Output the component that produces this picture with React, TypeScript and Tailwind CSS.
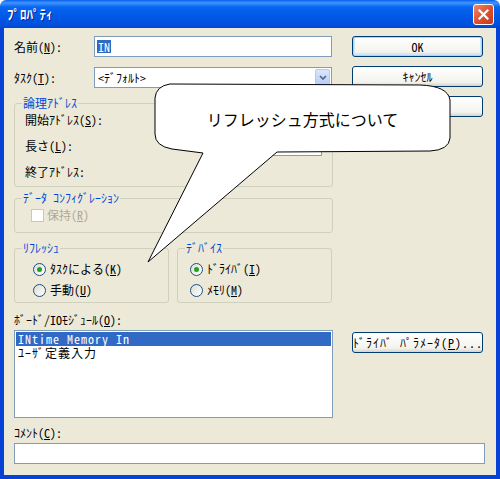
import React from 'react';

const btn =
  'h-[21px] w-[131px] rounded-[3px] border border-[#003C74] bg-[linear-gradient(#FFFFFF,#F3F3EE_80%,#D8D3C8)] flex items-center justify-center';

function Radio({ checked, children }: { checked?: boolean; children: React.ReactNode }) {
  return (
    <div className="flex items-center gap-[4px] h-[20px]">
      <span className="w-[13px] h-[13px] rounded-full border border-[#1C5180] bg-[linear-gradient(135deg,#DCDCD7,#FFFFFF)] flex items-center justify-center">
        {checked && <span className="w-[5px] h-[5px] rounded-full bg-[#21A121]" />}
      </span>
      <span>{children}</span>
    </div>
  );
}

function Legend({ children }: { children: React.ReactNode }) {
  return <legend className="ml-[7px] px-[1px] leading-[12px] text-[#0046D5]">{children}</legend>;
}

export default function App() {
  return (
    <div className="relative w-[500px] h-[479px] flex flex-col text-[12px] leading-[14px] text-black font-['Noto_Sans_Mono_CJK_JP','Noto_Sans_CJK_JP',sans-serif]">
      {/* title bar */}
      <div className="h-[28px] flex items-center justify-between pl-[7px] pr-[6px] rounded-t-[6px] bg-[linear-gradient(#0A5FEE,#3D95FF_10%,#0866F0_25%,#0058E6_60%,#0050DC_90%,#0044CF)]">
        <span className="text-white font-bold text-[13px] [text-shadow:1px_1px_#0A1E8C]">ﾌﾟﾛﾊﾟﾃｨ</span>
        <div className="w-[21px] h-[21px] rounded-[3px] border border-white bg-[linear-gradient(135deg,#F08A6A,#E0502F_50%,#C53A1A)] flex items-center justify-center">
          <svg width="11" height="11" viewBox="0 0 11 11">
            <path d="M1.5 1.5 L9.5 9.5 M9.5 1.5 L1.5 9.5" stroke="white" strokeWidth="2.2" strokeLinecap="square" />
          </svg>
        </div>
      </div>

      {/* body */}
      <div className="flex-1 flex flex-col bg-[#ECE9D8] border-x-4 border-b-4 border-[#0841D6] pl-[10px] pr-[11px]">
        <div className="flex gap-[19px]">
          <div className="w-[319px] flex flex-col">
            <div className="mt-[8px] flex items-center h-[21px]">
              <span className="w-[80px]">名前(<u>N</u>):</span>
              <div className="w-[238px] h-[21px] border border-[#7F9DB9] bg-white flex items-center pl-[2px]">
                <span className="bg-[#316AC5] text-white px-[1px] leading-[13px]">IN</span>
              </div>
            </div>
            <div className="mt-[10px] flex items-center h-[21px]">
              <span className="w-[80px]">ﾀｽｸ(<u>T</u>):</span>
              <div className="w-[238px] h-[21px] border border-[#7F9DB9] bg-white flex items-center justify-between pl-[3px] pr-[1px]">
                <span>&lt;ﾃﾞﾌｫﾙﾄ&gt;</span>
                <div className="w-[15px] h-[17px] rounded-[2px] border border-[#B4C8F6] bg-[linear-gradient(#DCE6FC,#B6CBF8)] flex items-center justify-center">
                  <svg width="8" height="5" viewBox="0 0 8 5">
                    <path d="M1 1 L4 4 L7 1" stroke="#4D6185" strokeWidth="1.6" fill="none" />
                  </svg>
                </div>
              </div>
            </div>

            <fieldset className="mt-[9px] border border-[#D0D0BF] rounded-[3px] pb-[4px]">
              <Legend>論理ｱﾄﾞﾚｽ</Legend>
              <div className="pl-[10px]">
                <div className="mt-[1px] flex items-center h-[20px]">
                  <span className="w-[179px]">開始ｱﾄﾞﾚｽ(<u>S</u>):</span>
                  <div className="w-[118px] h-[20px] border border-[#7F9DB9] bg-white" />
                </div>
                <div className="mt-[6px] flex items-center h-[20px]">
                  <span className="w-[179px]">長さ(<u>L</u>):</span>
                  <div className="w-[118px] h-[20px] border border-[#7F9DB9] bg-white" />
                </div>
                <div className="mt-[6px] flex items-center h-[20px]">
                  <span>終了ｱﾄﾞﾚｽ:</span>
                </div>
              </div>
            </fieldset>

            <fieldset className="mt-[5px] border border-[#D0D0BF] rounded-[3px] pb-[8px]">
              <Legend>ﾃﾞｰﾀ ｺﾝﾌｨｸﾞﾚｰｼｮﾝ</Legend>
              <div className="pl-[16px] mt-[2px] flex items-center gap-[3px] h-[18px] text-[#ACA899]">
                <span className="w-[13px] h-[13px] border border-[#CAC8BB] bg-white" />
                <span>保持(<u>R</u>)</span>
              </div>
            </fieldset>

            <div className="mt-[9px] flex gap-[8px]">
              <fieldset className="w-[155px] border border-[#D0D0BF] rounded-[3px] pb-[2px]">
                <Legend>ﾘﾌﾚｯｼｭ</Legend>
                <div className="pl-[18px] mt-[5px] flex flex-col gap-[1px]">
                  <Radio checked>ﾀｽｸによる(<u>K</u>)</Radio>
                  <Radio>手動(<u>U</u>)</Radio>
                </div>
              </fieldset>
              <fieldset className="w-[155px] border border-[#D0D0BF] rounded-[3px] pb-[2px]">
                <Legend>ﾃﾞﾊﾞｲｽ</Legend>
                <div className="pl-[12px] mt-[5px] flex flex-col gap-[1px]">
                  <Radio checked>ﾄﾞﾗｲﾊﾞ(<u>I</u>)</Radio>
                  <Radio>ﾒﾓﾘ(<u>M</u>)</Radio>
                </div>
              </fieldset>
            </div>

            <div className="mt-[10px]">ﾎﾞｰﾄﾞ/IOﾓｼﾞｭｰﾙ(<u>O</u>):</div>
          </div>

          <div className="w-[131px] flex flex-col pt-[8px] gap-[9px]">
            <button className={`${btn} shadow-[inset_0_0_0_1px_#B8D0F5,inset_0_-1px_0_2px_#CEE7FF]`}>OK</button>
            <button className={btn}>ｷｬﾝｾﾙ</button>
            <button className={btn}>ﾍﾙﾌﾟ</button>
          </div>
        </div>

        <div className="mt-[3px] flex gap-[19px] items-start">
          <div className="w-[319px] h-[88px] border border-[#7F9DB9] bg-white p-[1px] tracking-[1px]">
            <div className="h-[14px] leading-[14px] bg-[#316AC5] text-white pl-[2px]">INtime Memory In</div>
            <div className="h-[14px] leading-[14px] pl-[2px]">ﾕｰｻﾞ定義入力</div>
          </div>
          <button className={`${btn} mt-[2px] h-[20px] justify-start overflow-hidden whitespace-nowrap tracking-[1px]`}>
            ﾄﾞﾗｲﾊﾞ ﾊﾟﾗﾒｰﾀ(<u>P</u>)...
          </button>
        </div>

        <div className="mt-[8px]">ｺﾒﾝﾄ(<u>C</u>):</div>
        <div className="mt-[3px] h-[21px] border border-[#7F9DB9] bg-white" />
      </div>

      {/* callout */}
      <svg className="absolute left-0 top-0 pointer-events-none" width="500" height="479">
        <path
          d="M 170 84 L 420 85 Q 448 86 450 100 L 450 138 Q 449 150 430 151 L 277 152 L 148 262 L 203 153 L 172 149 Q 155 146 155 134 L 155 98 Q 156 86 170 84 Z"
          fill="white"
          stroke="black"
          strokeWidth="1"
        />
      </svg>
      <div className="absolute left-[155px] top-[86px] w-[295px] h-[66px] flex items-center justify-center text-[16px] font-['Noto_Sans_CJK_JP',sans-serif]">
        リフレッシュ方式について
      </div>
    </div>
  );
}
